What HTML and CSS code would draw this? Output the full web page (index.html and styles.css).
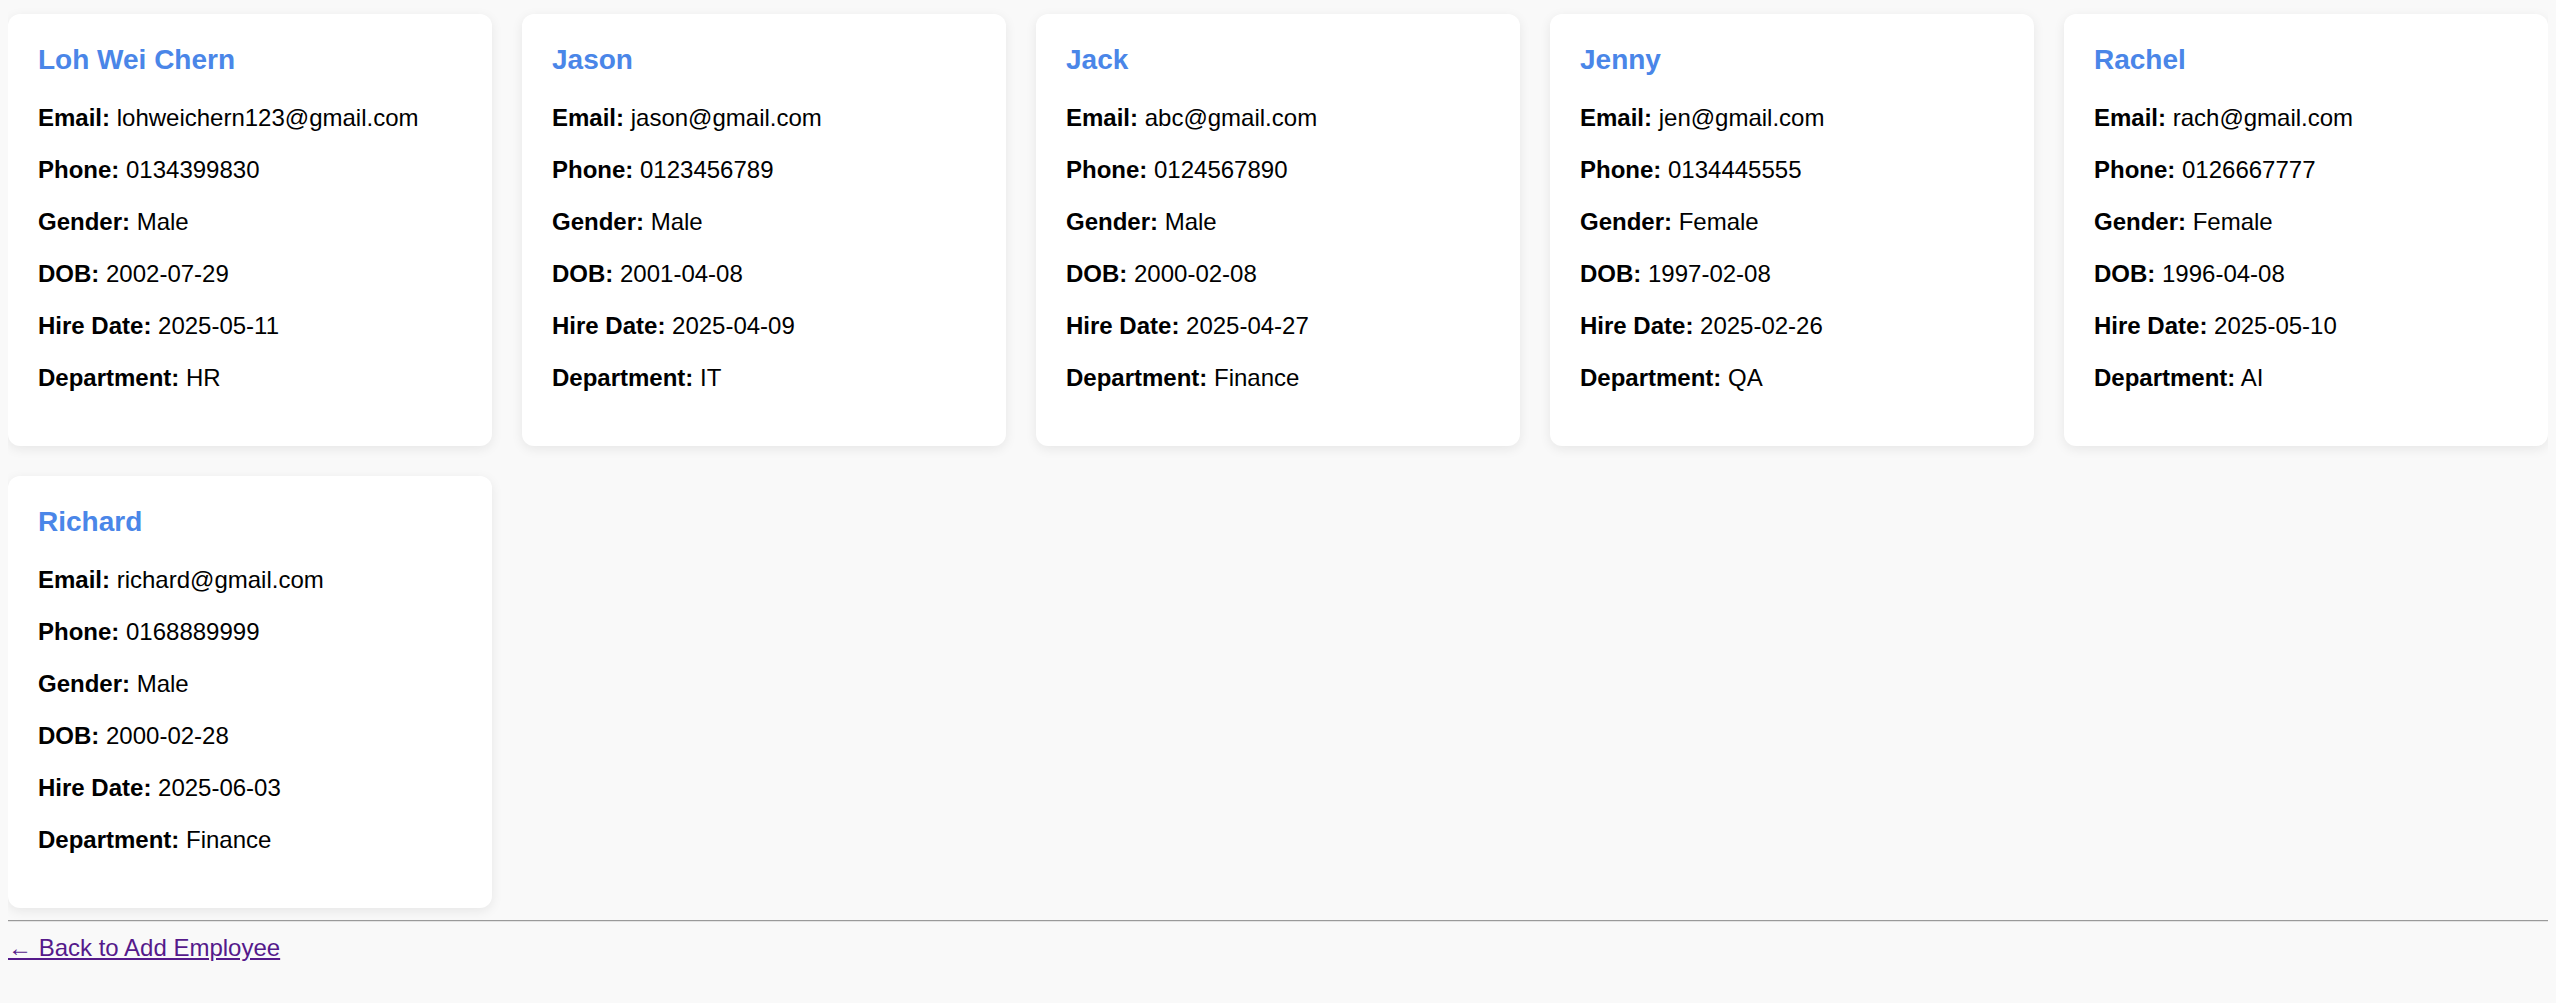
FILE: index.html
```html
<!DOCTYPE html>
<html lang="en">
<head>
<meta charset="utf-8">
<title>Employee List</title>
<link rel="stylesheet" href="styles.css">
</head>
<body>
<div class="grid">
  <div class="card">
    <h3 class="name">Loh Wei Chern</h3>
    <p><b>Email:</b> lohweichern123@gmail.com</p>
    <p><b>Phone:</b> 0134399830</p>
    <p><b>Gender:</b> Male</p>
    <p><b>DOB:</b> 2002-07-29</p>
    <p><b>Hire Date:</b> 2025-05-11</p>
    <p><b>Department:</b> HR</p>
  </div>
  <div class="card">
    <h3 class="name">Jason</h3>
    <p><b>Email:</b> jason@gmail.com</p>
    <p><b>Phone:</b> 0123456789</p>
    <p><b>Gender:</b> Male</p>
    <p><b>DOB:</b> 2001-04-08</p>
    <p><b>Hire Date:</b> 2025-04-09</p>
    <p><b>Department:</b> IT</p>
  </div>
  <div class="card">
    <h3 class="name">Jack</h3>
    <p><b>Email:</b> abc@gmail.com</p>
    <p><b>Phone:</b> 0124567890</p>
    <p><b>Gender:</b> Male</p>
    <p><b>DOB:</b> 2000-02-08</p>
    <p><b>Hire Date:</b> 2025-04-27</p>
    <p><b>Department:</b> Finance</p>
  </div>
  <div class="card">
    <h3 class="name">Jenny</h3>
    <p><b>Email:</b> jen@gmail.com</p>
    <p><b>Phone:</b> 0134445555</p>
    <p><b>Gender:</b> Female</p>
    <p><b>DOB:</b> 1997-02-08</p>
    <p><b>Hire Date:</b> 2025-02-26</p>
    <p><b>Department:</b> QA</p>
  </div>
  <div class="card">
    <h3 class="name">Rachel</h3>
    <p><b>Email:</b> rach@gmail.com</p>
    <p><b>Phone:</b> 0126667777</p>
    <p><b>Gender:</b> Female</p>
    <p><b>DOB:</b> 1996-04-08</p>
    <p><b>Hire Date:</b> 2025-05-10</p>
    <p><b>Department:</b> AI</p>
  </div>
  <div class="card">
    <h3 class="name">Richard</h3>
    <p><b>Email:</b> richard@gmail.com</p>
    <p><b>Phone:</b> 0168889999</p>
    <p><b>Gender:</b> Male</p>
    <p><b>DOB:</b> 2000-02-28</p>
    <p><b>Hire Date:</b> 2025-06-03</p>
    <p><b>Department:</b> Finance</p>
  </div>
</div>
<hr class="divider">
<a class="back" href="#">← Back to Add Employee</a>
</body>
</html>
```

FILE: styles.css
```css
html, body {
  background: #f9f9f9;
}
body {
  margin: 8px;
  font-family: "Liberation Sans", Arial, sans-serif;
  font-size: 24px;
  color: #000;
}
.grid {
  display: grid;
  grid-template-columns: repeat(5, 1fr);
  gap: 30px;
  padding-top: 6px;
}
.card {
  background: #fff;
  border-radius: 12px;
  padding: 30px;
  box-shadow: 0 3px 12px rgba(0, 0, 0, 0.08);
}
.name {
  margin: 0 0 28px;
  font-size: 28px;
  font-weight: bold;
  color: #4a86e8;
  line-height: 32px;
}
.card p {
  margin: 24px 0;
  line-height: 28px;
}
.card p:last-child {
  margin-bottom: 24px;
}
.card b {
  font-weight: bold;
}
.divider {
  margin: 12px 0;
  border: none;
  border-top: 1px solid #9a9a9a;
  border-bottom: 1px solid #e4e4e4;
  height: 0;
}
.back {
  color: #551a8b;
  text-decoration: underline;
  font-size: 24px;
  line-height: 28px;
}
```
